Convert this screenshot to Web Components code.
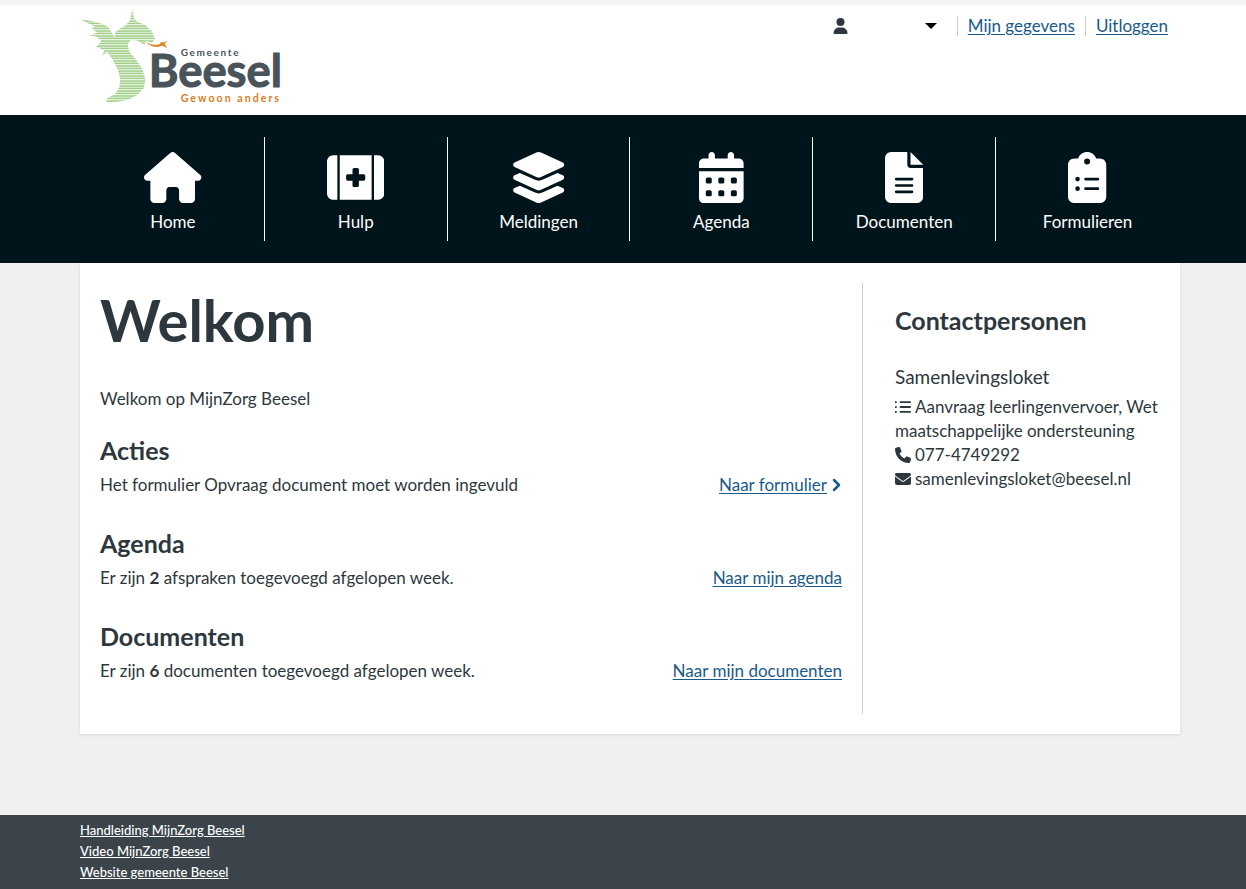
<!DOCTYPE html>
<html lang="nl">
<head>
<meta charset="utf-8">
<title>MijnZorg Beesel</title>
<style>
html,body{margin:0;min-height:100%}
body{font:17px/24px "Lato","Open Sans",sans-serif;color:#2d383e;background:#f0f0f0;
--gutter-left:80px;--gutter-right:66px;--link:#1a5a8a;--dark:#2d383e;--nav:#00141b}
</style>
</head>
<body>
<mz-page>
<mz-header slot="header"></mz-header>
<mz-nav slot="nav">
<mz-nav-item icon="home">Home</mz-nav-item>
<mz-nav-item icon="kit">Hulp</mz-nav-item>
<mz-nav-item icon="layers">Meldingen</mz-nav-item>
<mz-nav-item icon="calendar">Agenda</mz-nav-item>
<mz-nav-item icon="file">Documenten</mz-nav-item>
<mz-nav-item icon="clipboard">Formulieren</mz-nav-item>
</mz-nav>
<mz-card>
<mz-welcome></mz-welcome>
<mz-block heading="Acties" link="Naar formulier" arrow>Het formulier Opvraag document moet worden ingevuld</mz-block>
<mz-block heading="Agenda" link="Naar mijn agenda">Er zijn <b>2</b> afspraken toegevoegd afgelopen week.</mz-block>
<mz-block heading="Documenten" link="Naar mijn documenten">Er zijn <b>6</b> documenten toegevoegd afgelopen week.</mz-block>
<mz-contact slot="aside"></mz-contact>
</mz-card>
<mz-footer slot="footer"></mz-footer>
</mz-page>
<script>
const icons={
home:['0 0 576 512','<path d="M575.8 255.5c0 18-15 32.1-32 32.1h-32l.7 160.2c0 2.7-.2 5.4-.5 8.1V472c0 22.1-17.9 40-40 40H392c-22.1 0-40-17.9-40-40V384c0-17.7-14.3-32-32-32H256c-17.7 0-32 14.3-32 32v88c0 22.1-17.9 40-40 40H104c-22.1 0-40-17.9-40-40V287.6H32c-18 0-32-14-32-32.1 0-9 3-17 10-24L266.4 8c7-7 15-8 22-8s15 2 21 7L564.8 231.5c8 7 12 15 11 24z"/>'],
kit:['0 0 576 512','<path d="M0 96V416c0 35.3 28.7 64 64 64H104V32H64C28.7 32 0 60.700 0 96zM128 32V480H448V32zM512 32H472V480h40c35.300 0 64-28.700 64-64V96c0-35.300-28.700-64-64-64z"/><path fill="var(--nav)" d="M256 176c0-8.800 7.200-16 16-16h32c8.800 0 16 7.200 16 16v48h48c8.800 0 16 7.200 16 16v32c0 8.800-7.200 16-16 16h-48v48c0 8.800-7.200 16-16 16h-32c-8.800 0-16-7.200-16-16v-48h-48c-8.800 0-16-7.200-16-16v-32c0-8.800 7.200-16 16-16h48z"/>'],
layers:['0 0 576 512','<path d="M264.5 5.2c14.900-6.900 32.100-6.900 47 0l218.600 101c8.500 3.900 13.900 12.400 13.900 21.800s-5.400 17.900-13.900 21.800l-218.600 101c-14.900 6.900-32.100 6.900-47 0L45.900 149.800C37.400 145.800 32 137.300 32 128s5.400-17.900 13.900-21.800zM476.900 209.600l53.200 24.600c8.500 3.900 13.900 12.400 13.900 21.800s-5.400 17.900-13.900 21.800l-218.600 101c-14.900 6.900-32.100 6.900-47 0L45.900 277.800C37.400 273.800 32 265.300 32 256s5.400-17.900 13.900-21.800l53.200-24.600 152 70.200c23.400 10.800 50.400 10.800 73.800 0zm-152 198.200l152-70.200 53.200 24.600c8.500 3.900 13.900 12.400 13.900 21.800s-5.400 17.900-13.900 21.800l-218.600 101c-14.900 6.900-32.100 6.900-47 0L45.900 405.800C37.400 401.800 32 393.300 32 384s5.400-17.900 13.900-21.800l53.200-24.600 152 70.200c23.400 10.800 50.400 10.800 73.800 0z"/>'],
calendar:['0 0 448 512','<path d="M96 32V64H48C21.500 64 0 85.500 0 112v48H448V112c0-26.500-21.500-48-48-48H352V32c0-17.700-14.300-32-32-32s-32 14.300-32 32V64H160V32c0-17.700-14.300-32-32-32S96 14.300 96 32zM448 192H0V464c0 26.500 21.500 48 48 48H400c26.500 0 48-21.500 48-48z"/><g fill="var(--nav)"><rect x="68" y="256" width="60" height="60" rx="16"/><rect x="194" y="256" width="60" height="60" rx="16"/><rect x="320" y="256" width="60" height="60" rx="16"/><rect x="68" y="384" width="60" height="60" rx="16"/><rect x="194" y="384" width="60" height="60" rx="16"/><rect x="320" y="384" width="60" height="60" rx="16"/></g>'],
file:['0 0 384 512','<path d="M64 0C28.700 0 0 28.700 0 64V448c0 35.300 28.700 64 64 64H320c35.300 0 64-28.700 64-64V160H256c-17.700 0-32-14.300-32-32V0zM256 0V128H384z"/><path stroke="var(--nav)" stroke-width="26" stroke-linecap="round" d="M112 272H272M112 336H272M112 400H272"/>'],
clipboard:['0 0 384 512','<path d="M192 0c-41.800 0-77.400 26.700-90.500 64H64C28.700 64 0 92.700 0 128V448c0 35.300 28.700 64 64 64H320c35.300 0 64-28.700 64-64V128c0-35.300-28.700-64-64-64H282.500C269.400 26.700 233.800 0 192 0z"/><g fill="var(--nav)"><circle cx="192" cy="96" r="30"/><circle cx="96" cy="272" r="23"/><circle cx="96" cy="368" r="23"/></g><path stroke="var(--nav)" stroke-width="27" stroke-linecap="round" d="M176 272H300M176 368H300"/>'],
user:['0 0 448 512','<circle cx="224" cy="128" r="128"/><path d="M178.300 304C79.800 304 0 383.800 0 482.300 0 498.700 13.300 512 29.700 512H418.300c16.400 0 29.700-13.300 29.700-29.700C448 383.800 368.200 304 269.700 304z"/>'],
list:['0 0 512 512','<path d="M0 72h56v56H0zM0 228h56v56H0zM0 384h56v56H0z"/><path stroke="currentColor" stroke-width="60" stroke-linecap="round" d="M176 100H482M176 256H482M176 412H482"/>'],
phone:['0 0 512 512','<path d="M164.900 24.600c-7.700-18.600-28-28.500-47.400-23.200l-88 24C12.100 30.200 0 46 0 64c0 247.400 200.600 448 448 448 18 0 33.800-12.100 38.600-29.500l24-88c5.300-19.400-4.600-39.700-23.200-47.400l-96-40c-16.300-6.800-35.200-2.100-46.300 11.600L304.700 368C234.300 334.700 177.300 277.700 144 207.300L193.300 167c13.700-11.200 18.400-30 11.600-46.300z"/>'],
mail:['0 0 512 512','<path d="M48 64C21.500 64 0 85.500 0 112c0 15.100 7.100 29.300 19.200 38.400L236.800 313.600c11.400 8.500 27 8.500 38.400 0L492.800 150.400c12.100-9.100 19.200-23.300 19.200-38.400 0-26.500-21.500-48-48-48zM0 176V384c0 35.300 28.700 64 64 64H448c35.300 0 64-28.700 64-64V176L294.400 339.200c-22.800 17.100-54 17.100-76.800 0z"/>'],
chevron:['0 0 320 512','<path d="M64 96L224 256 64 416" fill="none" stroke="currentColor" stroke-width="80" stroke-linecap="round" stroke-linejoin="round"/>']
};
const icon=n=>`<svg aria-hidden="true" fill="currentColor" viewBox="${icons[n][0]}">${icons[n][1]}</svg>`;
const define=(name,render)=>customElements.define(name,class extends HTMLElement{
  connectedCallback(){ if(!this.shadowRoot) this.attachShadow({mode:"open"}).innerHTML=render(this); }
});

define("mz-page",()=>`<style>
:host{display:flex;flex-direction:column;min-height:100vh}
main{flex:1;padding:0 var(--gutter-right) 80px var(--gutter-left)}
</style><slot name="header"></slot><slot name="nav"></slot><main><slot></slot></main><slot name="footer"></slot>`);

define("mz-logo",()=>`<style>
:host{display:block}svg{display:block;width:220px;height:110px}
text{font-family:"Lato",sans-serif;font-weight:700}
</style><svg viewBox="0 15 660 330" role="img" aria-label="Gemeente Beesel">
<defs><pattern id="lines" width="20" height="7.500" patternUnits="userSpaceOnUse"><rect width="20" height="8" fill="#f1f8ec"/><rect y="1" width="20" height="4" fill="#95c97a"/></pattern></defs>
<path fill="url(#lines)" d="M15 58L34 60 70 68 100 80 110 98 118 112 121 96 135 86 152 76 164 62 172 29 178 56 188 66 212 76 232 97 240 118 230 128 214 123 208 135 188 122 168 119 158 132 162 154 184 180 202 207 211 237 207 263 188 284 160 299 126 306H93L98 293 120 283 133 262 136 238 128 208 110 174 96 156 80 169 88 151 64 140 79 123 64 110 43 106 66 98 50 84 60 80 36 68z"/>
<path d="M212 127Q229 136 246 134 258 133 257 126L267 127 278 122 269 131 277 144 262 137 250 141Q230 143 212 127z" fill="#e28a35"/>
<text x="317" y="167" font-size="30" letter-spacing="5" fill="#48535a">Gemeente</text>
<text x="221" y="261" font-size="136" fill="#48535a" stroke="#48535a" stroke-width="3">Beesel</text>
<text x="317" y="305" font-size="32" letter-spacing="6" fill="#d97d24">Gewoon anders</text>
</svg>`);

define("mz-header",()=>`<style>
:host{display:block;background:#fff;border-top:5px solid #f3f3f3}
header{display:flex;justify-content:space-between;align-items:flex-start;height:110px;padding:0 78px 0 75px}
.account{display:flex;align-items:center;margin-top:11px}
button{display:flex;justify-content:space-between;align-items:center;width:104px;padding:0;margin-right:20px;border:0;background:none;color:var(--dark)}
button svg{width:15px;height:16px}
i{border:6px solid transparent;border-top:6px solid #000;border-bottom:0}
a{color:var(--link);line-height:20px;padding-left:10px;border-left:1px solid #ccc;margin-right:10px;text-underline-offset:2px}
a:last-child{margin-right:0}
</style><header><mz-logo></mz-logo><div class="account"><button aria-label="Account">${icon("user")}<i></i></button><a href="#gegevens">Mijn gegevens</a><a href="#uitloggen">Uitloggen</a></div></header>`);

define("mz-nav",()=>`<style>
:host{display:block;background:var(--nav)}
nav{display:grid;grid-template-columns:repeat(6,1fr);padding:22px 67px 22px 82px}
::slotted(:not(:last-child)){border-right:1px solid #fff}
</style><nav><slot></slot></nav>`);

define("mz-nav-item",el=>`<style>
:host{display:block;height:104px}
a{display:flex;flex-direction:column;align-items:center;gap:7px;padding-top:15px;color:#fff;text-decoration:none}
svg{height:51px}
</style><a href="#${el.getAttribute("icon")}">${icon(el.getAttribute("icon"))}<span><slot></slot></span></a>`);

define("mz-card",()=>`<style>
:host{display:grid;grid-template-columns:1fr 298px;column-gap:20px;padding:20px;background:#fff;box-shadow:0 1px 3px #0000001a}
section{padding-bottom:31px}
aside{border-left:1px solid #ccc;padding-left:32px}
</style><section><slot></slot></section><aside><slot name="aside"></slot></aside>`);

define("mz-welcome",()=>`<style>
:host{display:block}
h1{margin:0;font-size:58px;line-height:74px;font-weight:700}
p{margin:30px 0 23px}
</style><h1>Welkom</h1><p>Welkom op MijnZorg Beesel</p>`);

define("mz-block",el=>`<style>
:host{display:block;margin-bottom:30px}
:host(:last-of-type){margin-bottom:0}
h2{margin:0 0 7px;font-size:25px;line-height:32px;font-weight:700}
div{display:flex;justify-content:space-between}
p{margin:0}
span{display:flex;align-items:center;gap:5px;color:var(--link)}
a{color:inherit;text-underline-offset:2px}
svg{width:10px;height:16px}
</style><h2>${el.getAttribute("heading")}</h2><div><p><slot></slot></p><span><a href="#naar">${el.getAttribute("link")}</a>${el.hasAttribute("arrow")?icon("chevron"):""}</span></div>`);

define("mz-contact",()=>`<style>
:host{display:block}
h2{margin:21px 0 29px;font-size:25px;line-height:32px}
h3{margin:0 0 6px;font-size:19px;line-height:24px;font-weight:400}
p{margin:0}
svg{width:16px;height:16px;margin-right:4px;vertical-align:-2px}
</style><h2>Contactpersonen</h2><h3>Samenlevingsloket</h3><p>${icon("list")}Aanvraag leerlingenvervoer, Wet maatschappelijke ondersteuning</p><p>${icon("phone")}077-4749292</p><p>${icon("mail")}samenlevingsloket@beesel.nl</p>`);

define("mz-footer",()=>`<style>
:host{display:block;background:#3a444a}
footer{display:flex;flex-direction:column;align-items:flex-start;padding:5px var(--gutter-right) 6px var(--gutter-left)}
a{color:#fff;font-size:13px;line-height:21px;font-weight:500;text-underline-offset:1px}
</style><footer><a href="#handleiding">Handleiding MijnZorg Beesel</a><a href="#video">Video MijnZorg Beesel</a><a href="#website">Website gemeente Beesel</a></footer>`);
</script>
</body>
</html>
